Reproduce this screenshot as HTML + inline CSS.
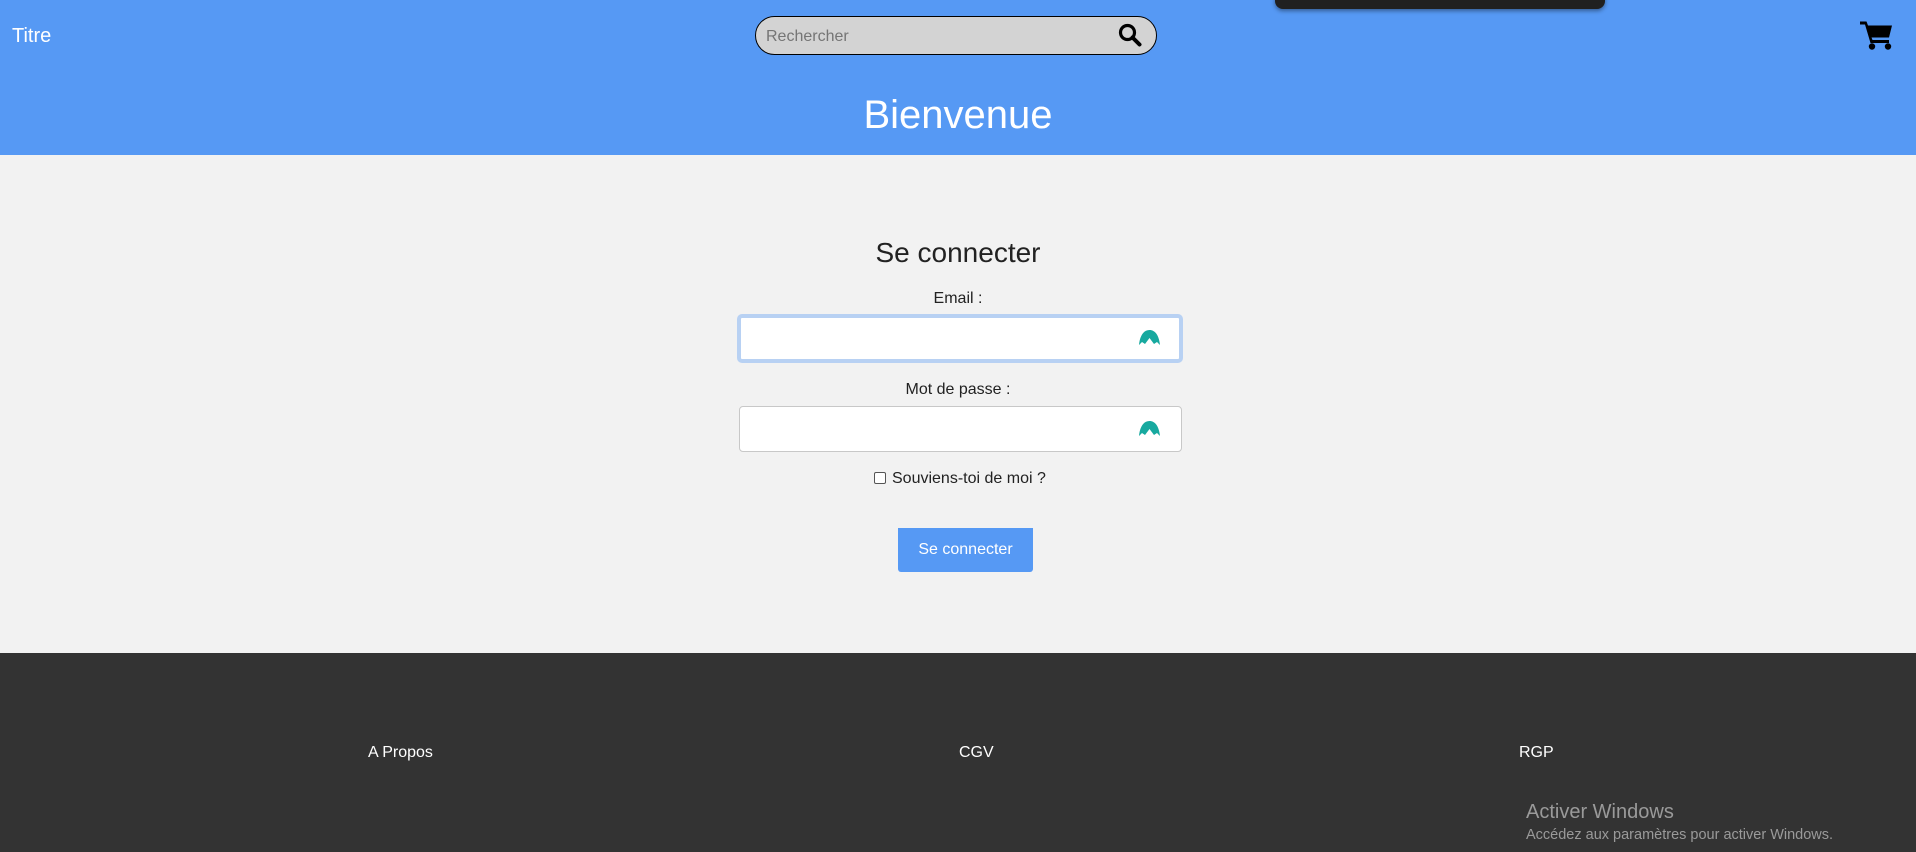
<!DOCTYPE html>
<html><head><meta charset="utf-8"><style>
*{box-sizing:border-box;margin:0;padding:0}
body{width:1916px;height:852px;overflow:hidden;font-family:"Liberation Sans",Arial,sans-serif;background:#f2f2f2;position:relative}
.hdr{position:absolute;left:0;top:0;width:1916px;height:155px;background:#5699f4}
.abs{position:absolute}
</style></head><body>
<div class="hdr">
  <div class="abs" style="left:12px;top:25px;color:#fff;font-size:20px">Titre</div>
  <div class="abs" style="left:755px;top:16px;width:402px;height:39px;border:1px solid #000;border-radius:20px;background:#d3d3d3">
    <span class="abs" style="left:10px;top:11px;font-size:16px;color:#757575">Rechercher</span>
    <svg class="abs" style="left:362px;top:6px" width="24" height="24" viewBox="0 0 24 24"><circle cx="9.5" cy="9.5" r="7" fill="none" stroke="#000" stroke-width="3.2"/><line x1="14.5" y1="14.5" x2="21.5" y2="21.5" stroke="#000" stroke-width="4" stroke-linecap="round"/></svg>
  </div>
  <svg class="abs" style="left:1860px;top:20px" width="33" height="30" viewBox="0 0 33 30"><path d="M0 1.5h6.5l1.5 4H32l-3 12H11.5l1 2.5H29v3H10.5L5 4.5H0z" fill="#000"/><circle cx="12" cy="26.5" r="3.2"/><circle cx="28" cy="26.5" r="3.2"/></svg>
  <div class="abs" style="left:1275px;top:-12px;width:330px;height:21px;background:#202020;border-radius:8px;box-shadow:0 2px 4px rgba(0,0,0,.4)"></div>
  <div class="abs" style="left:0;width:1916px;top:93px;text-align:center;color:#fff;font-size:40px">Bienvenue</div>
</div>
<div class="abs" style="left:0;width:1916px;top:237px;text-align:center;font-size:28px;color:#222">Se connecter</div>
<div class="abs" style="left:0;width:1916px;top:290px;text-align:center;font-size:16px;color:#222">Email :</div>
<div class="abs" style="left:737px;top:314px;width:446px;height:49px;border:4px solid #b8d1f3;border-radius:5px;background:#fff"></div>
<svg class="abs" style="left:1139px;top:329px" width="21" height="17" viewBox="0 0 21 17"><path d="M0 16C1 6 5 1 10.5 1S20 6 21 16l-3-3-3 2-4.5-6-4.5 6-3-2z" fill="#17a99f"/></svg>
<div class="abs" style="left:0;width:1916px;top:381px;text-align:center;font-size:16px;color:#222">Mot de passe :</div>
<div class="abs" style="left:739px;top:406px;width:443px;height:46px;border:1px solid #c8c8c8;border-radius:4px;background:#fff"></div>
<svg class="abs" style="left:1139px;top:420px" width="21" height="17" viewBox="0 0 21 17"><path d="M0 16C1 6 5 1 10.5 1S20 6 21 16l-3-3-3 2-4.5-6-4.5 6-3-2z" fill="#17a99f"/></svg>
<div class="abs" style="left:874px;top:472px;width:12px;height:12px;border:1px solid #555;border-radius:2px;background:#fff"></div>
<div class="abs" style="left:892px;top:470px;font-size:16px;color:#222">Souviens-toi de moi ?</div>
<div class="abs" style="left:898px;top:528px;width:135px;height:44px;background:#5699f4;border-radius:0 0 3px 3px;color:#fff;font-size:16px;text-align:center;line-height:44px">Se connecter</div>
<div class="abs" style="left:0;top:653px;width:1916px;height:199px;background:#333">
  <span class="abs" style="left:368px;top:91px;color:#fff;font-size:16px">A Propos</span>
  <span class="abs" style="left:959px;top:91px;color:#fff;font-size:16px">CGV</span>
  <span class="abs" style="left:1519px;top:91px;color:#fff;font-size:16px">RGP</span>
  <span class="abs" style="left:1526px;top:148px;color:#9a9a9a;font-size:20px">Activer Windows</span>
  <span class="abs" style="left:1526px;top:174px;color:#9a9a9a;font-size:14.5px">Accédez aux paramètres pour activer Windows.</span>
</div>
</body></html>
